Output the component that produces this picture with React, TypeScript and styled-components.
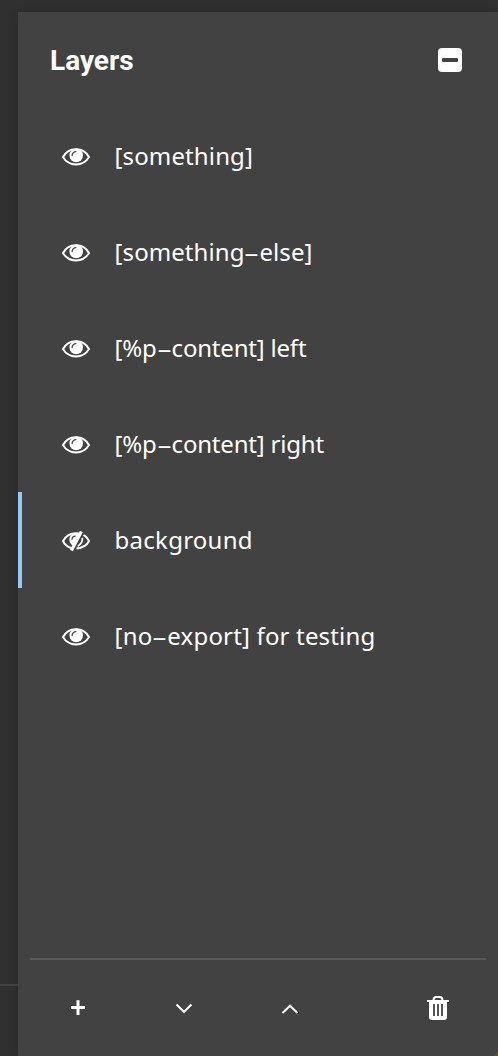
import React from 'react';
import styled, { createGlobalStyle } from 'styled-components';

const Global = createGlobalStyle`
  * { box-sizing: border-box; }
  html, body { margin: 0; height: 100%; background: #303030; }
  body { overflow: hidden; }
`;
const Page = styled.div`
  position: relative;
  display: flex;
  width: 498px;
  height: 1056px;
  padding-top: 12px;
  background: #303030;
  color: #fff;
`;
const Corner = styled.div`
  position: absolute;
  right: 0;
  bottom: 0;
  width: 4px;
  height: 4px;
  background: linear-gradient(135deg, transparent 45%, #6b4a0c 45%);
`;
const Gutter = styled.div`
  width: 18px;
  padding-top: 972px;
`;
const GutterLine = styled.div`
  height: 2px;
  background: #444;
`;
const Panel = styled.section`
  display: flex;
  flex-direction: column;
  flex: 1;
  background: #424242;
  box-shadow: 0 0 10px rgba(0, 0, 0, 0.12);
`;
const Header = styled.header`
  display: flex;
  align-items: center;
  justify-content: space-between;
  height: 96px;
  padding: 0 36px 0 32px;
`;
const Title = styled.h2`
  margin: 0;
  padding-top: 2px;
  font: 700 28px/36px Roboto, sans-serif;
`;
const IconButton = styled.button`
  display: flex;
  align-items: center;
  justify-content: center;
  padding: 0;
  border: 0;
  background: none;
  color: #fff;
`;
const List = styled.ul`
  flex: 1;
  margin: 0;
  padding: 0;
  list-style: none;
`;
const Row = styled.li<{ $active?: boolean }>`
  display: flex;
  align-items: center;
  gap: 23.6px;
  height: 96px;
  padding-left: 39px;
  border-left: 4px solid ${p => (p.$active ? '#90caf9' : 'transparent')};
`;
const EyeIcon = styled.svg`
  display: block;
  width: 30px;
  height: 24px;
`;
const Name = styled.span<{ $spacing: number }>`
  font: 400 24px/32px 'Noto Sans', sans-serif;
  letter-spacing: ${p => p.$spacing}px;
  white-space: pre;
`;
const Dash = styled.span`
  display: inline-block;
  width: 15px;
  text-align: center;
  letter-spacing: 0;
  transform: scaleX(2);
`;
const Footer = styled.footer`
  display: flex;
  align-items: center;
  height: 98px;
  margin: 0 12px;
  padding: 0 36px;
  border-top: 2px solid #585858;
`;
const Tool = styled(IconButton)<{ $after?: string }>`
  width: 24px;
  height: 28px;
  margin-right: ${p => p.$after ?? '0'};
`;

const Eye = ({ hidden }: { hidden?: boolean }) => (
  <EyeIcon viewBox="0 0 30 24" fill="none">
    {hidden ? (
      <>
        <path d="M10 20C6.3 18.8 3.4 16 2 13C4.8 8 9.5 5.2 15 5.2L20 5.8" stroke="#fff" strokeWidth="2" />
        <path d="M22.5 7C25.3 8.6 27.2 10.8 28 13C25.7 17.5 21 20.2 15.5 20.5" stroke="#fff" strokeWidth="2" />
        <path d="M11.5 17.5C7.3 14.5 7.3 8 11.8 5.2H18.6L12 17.5Z" fill="#fff" />
        <path d="M11 11.8C11 9.6 12.5 8.2 14.5 8.2" stroke="#424242" strokeWidth="1.2" />
        <path d="M21.4 9.8C21.6 13.8 19.7 16.6 16.7 18.2" stroke="#fff" strokeWidth="1.7" />
        <path d="M20.4 3.4L10.4 22.4" stroke="#fff" strokeWidth="3.2" />
      </>
    ) : (
      <>
        <path d="M2 13C4.8 7.9 9.5 5.2 15 5.2S25.2 7.9 28 13C25.2 17.8 20.5 20.4 15 20.4S4.8 17.8 2 13Z" stroke="#fff" strokeWidth="2" strokeLinejoin="round" />
        <circle cx="15.2" cy="11.4" r="6.8" fill="#fff" />
        <path d="M11.2 11.4C11.2 9.2 12.7 7.9 14.9 7.6" stroke="#424242" strokeWidth="1.3" strokeLinecap="round" />
      </>
    )}
  </EyeIcon>
);

const layers = [
  { name: '[something]', spacing: 0.12 },
  { name: '[something-else]', spacing: 0.07 },
  { name: '[%p-content] left', spacing: -0.2 },
  { name: '[%p-content] right', spacing: -0.2 },
  { name: 'background', spacing: 0.25, hidden: true, active: true },
  { name: '[no-export] for testing', spacing: 0.17 },
];

export default function App() {
  return (
    <>
      <Global />
      <Page>
        <Gutter><GutterLine /></Gutter>
        <Panel>
          <Header>
            <Title>Layers</Title>
            <IconButton aria-label="Collapse">
              <svg width="24" height="24" viewBox="0 0 24 24">
                <rect width="24" height="24" rx="4" fill="#fff" />
                <rect x="4" y="10" width="16" height="4" rx="1" fill="#424242" />
              </svg>
            </IconButton>
          </Header>
          <List>
            {layers.map(l => (
              <Row key={l.name} $active={l.active}>
                <Eye hidden={l.hidden} />
                <Name $spacing={l.spacing}>
                  {l.name.split('-').map((part, i) => (
                    <React.Fragment key={i}>{i > 0 && <Dash>-</Dash>}{part}</React.Fragment>
                  ))}
                </Name>
              </Row>
            ))}
          </List>
          <Footer>
            <Tool $after="82px" aria-label="Add">
              <svg width="24" height="28" viewBox="0 0 24 28"><path d="M12 6.3V21M5 13.5H19" stroke="#fff" strokeWidth="3" /></svg>
            </Tool>
            <Tool $after="82px" aria-label="Move down">
              <svg width="24" height="28" viewBox="0 0 24 28" fill="none"><path d="M4.5 10.5L12 17.8L19.5 10.5" stroke="#fff" strokeWidth="2" /></svg>
            </Tool>
            <Tool $after="auto" aria-label="Move up">
              <svg width="24" height="28" viewBox="0 0 24 28" fill="none"><path d="M4.5 19L12 11.7L19.5 19" stroke="#fff" strokeWidth="2" /></svg>
            </Tool>
            <Tool aria-label="Delete">
              <svg width="24" height="28" viewBox="0 0 24 28" fill="none">
                <path d="M7.5 6.5C7.5 3.5 8.5 3 10 3H14C15.5 3 16.5 3.5 16.5 6.5" stroke="#fff" strokeWidth="2" />
                <path d="M1 6H23V8H21V23Q21 26 18 26H6Q3 26 3 23V8H1Z" fill="#fff" />
                <path d="M8 10V22M12 10V22M16 10V22" stroke="#424242" strokeWidth="1.8" />
              </svg>
            </Tool>
          </Footer>
        </Panel>
        <Corner />
      </Page>
    </>
  );
}
